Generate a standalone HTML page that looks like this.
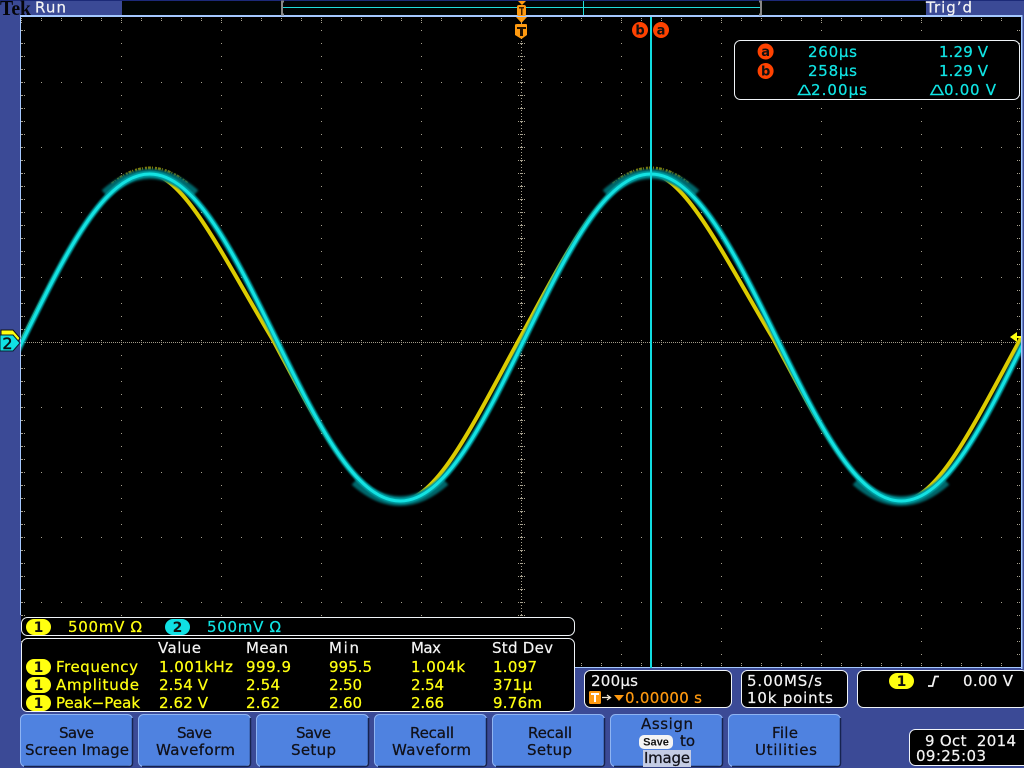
<!DOCTYPE html>
<html><head><meta charset="utf-8"><style>
html,body{margin:0;padding:0;background:#000;width:1024px;height:768px;overflow:hidden}
svg{display:block}
text{font-family:"DejaVu Sans","Liberation Sans",sans-serif;font-size:15px;white-space:pre}
.y{fill:#ffff10;stroke:#ffff10;stroke-width:.25}.c{fill:#10e4e4;stroke:#10e4e4;stroke-width:.25}.w{fill:#f4f4f4;stroke:#f4f4f4;stroke-width:.2}.k{fill:#101018;stroke:#101018;stroke-width:.25}.o{fill:#ff9a10;stroke:#ff9a10;stroke-width:.25}
.box{fill:#000;stroke:#f0f4f8;stroke-width:1}
.btn{fill:#4f82e0;stroke:#8fb4f2;stroke-width:1}
.sh{fill:none;stroke:#16234f;stroke-width:1.5}
.pk{fill:#101010;font-size:14px;text-anchor:middle;font-weight:bold}
.cur{fill:#101010;font-size:13px;text-anchor:middle;font-weight:bold}
</style></head><body>
<svg width="1024" height="768" viewBox="0 0 1024 768" xmlns="http://www.w3.org/2000/svg">
<defs>
<pattern id="g" x="21" y="17" width="100" height="65" patternUnits="userSpaceOnUse">
<rect x="20" y="0" width="1" height="1" fill="#a8a290"/><rect x="40" y="0" width="1" height="1" fill="#a8a290"/><rect x="60" y="0" width="1" height="1" fill="#a8a290"/><rect x="80" y="0" width="1" height="1" fill="#a8a290"/>
<rect x="0" y="0" width="1" height="1" fill="#a8a290"/><rect x="0" y="13" width="1" height="1" fill="#a8a290"/><rect x="0" y="26" width="1" height="1" fill="#a8a290"/><rect x="0" y="39" width="1" height="1" fill="#a8a290"/><rect x="0" y="52" width="1" height="1" fill="#a8a290"/>
</pattern>
<pattern id="tk" x="21" y="18" width="20" height="5" patternUnits="userSpaceOnUse"><rect x="0" y="0" width="1" height="1" fill="#a8a290"/><rect x="0" y="2" width="1" height="1" fill="#a8a290"/></pattern>
<pattern id="tm" x="21" y="18" width="100" height="6" patternUnits="userSpaceOnUse"><rect x="0" y="0" width="1" height="1" fill="#a8a290"/><rect x="0" y="2" width="1" height="1" fill="#a8a290"/><rect x="0" y="4" width="1" height="1" fill="#a8a290"/></pattern>
<pattern id="lt" x="21" y="17" width="5" height="13" patternUnits="userSpaceOnUse"><rect x="1" y="0" width="1" height="1" fill="#a8a290"/><rect x="3" y="0" width="1" height="1" fill="#a8a290"/></pattern>
<pattern id="hd" x="21" y="342" width="2" height="1" patternUnits="userSpaceOnUse"><rect x="0" y="0" width="1" height="1" fill="#a09a88"/></pattern>
<pattern id="vd" x="521" y="17" width="1" height="3" patternUnits="userSpaceOnUse"><rect x="0" y="0" width="1" height="1" fill="#a8a290"/></pattern>
<pattern id="ht" x="21" y="340" width="20" height="5" patternUnits="userSpaceOnUse"><rect x="0" y="0" width="1" height="1" fill="#a8a290"/><rect x="0" y="4" width="1" height="1" fill="#a8a290"/></pattern>
<pattern id="vt" x="518" y="17" width="7" height="13" patternUnits="userSpaceOnUse"><rect x="0" y="0" width="1" height="1" fill="#a8a290"/><rect x="2" y="0" width="1" height="1" fill="#a8a290"/><rect x="4" y="0" width="1" height="1" fill="#a8a290"/><rect x="6" y="0" width="1" height="1" fill="#a8a290"/></pattern>
<clipPath id="plot"><rect x="21" y="17" width="1000" height="651"/></clipPath>
<filter id="soft" x="-5%" y="-20%" width="110%" height="140%"><feGaussianBlur stdDeviation="1"/></filter>
<filter id="soft2" x="-5%" y="-5%" width="110%" height="110%"><feGaussianBlur stdDeviation="0.7"/></filter>
</defs>

<!-- frame -->
<rect width="1024" height="768" fill="#3b4a96"/>
<rect x="21" y="17" width="1000" height="651" fill="#000"/>
<rect x="20" y="15" width="1002" height="2" fill="#a5c8ff"/>
<rect x="20" y="15" width="1" height="600" fill="#a5c8ff"/>
<rect x="1021" y="15" width="1.5" height="654" fill="#a5c8ff"/>
<rect x="575" y="667" width="447" height="1" fill="#a5c8ff"/>

<!-- top bar -->
<rect x="0" y="0" width="1024" height="1" fill="#1c2a78"/>
<rect x="122" y="1" width="804" height="14" fill="#000504"/>
<rect x="283" y="7" width="478" height="1" fill="#20dcdc"/>
<rect x="583" y="1" width="1" height="14" fill="#20dcdc"/>
<path d="M284 1.5H282V14.5H284M759 1.5H761V14.5H759" fill="none" stroke="#888" stroke-width="2"/>
<text x="0" y="15" style="font-family:'Liberation Serif',serif;font-size:21px;font-weight:bold;fill:#05050a" textLength="31" lengthAdjust="spacingAndGlyphs">Tek</text>
<text x="35" y="12.5" class="w" textLength="31">Run</text>
<text x="926" y="12.5" class="w" textLength="46">Trig’d</text>

<!-- graticule -->
<g>
<rect x="21" y="18" width="1000" height="649" fill="url(#g)"/>
<rect x="21" y="18" width="1000" height="3" fill="url(#tk)"/>
<rect x="21" y="18" width="1000" height="5" fill="url(#tm)"/>
<rect x="21" y="663" width="1000" height="3" fill="url(#tk)"/>
<rect x="21" y="18" width="5" height="649" fill="url(#lt)"/>
<rect x="1016" y="18" width="5" height="649" fill="url(#lt)"/>
<rect x="21" y="342" width="1000" height="1" fill="url(#hd)"/>
<rect x="21" y="340" width="1000" height="5" fill="url(#ht)"/>
<rect x="521" y="18" width="1" height="649" fill="url(#vd)"/>
<rect x="518" y="18" width="7" height="649" fill="url(#vt)"/>
</g>

<!-- waveforms -->
<g clip-path="url(#plot)" fill="none">
<g stroke="#857e08" stroke-width="3" stroke-dasharray="3 1 1 2 2 1">
<path d="M112 184Q150 152 188 184M613 184Q651 152 689 184"/>
</g>
<path d="M21 342C65.35 253.7 104.4 174 149.75 174C184 174 226 262 273 340C316 420 355 501 400 501C437 501 474 422 520 338C566 253.7 605 174 650.75 174C685 174 727 262 774 340C817 420 856 501 901 501C938 501 975 422 1021 338" stroke="#dccc00" stroke-width="4"/>
<g stroke="#04666a" stroke-width="10" filter="url(#soft)">
<path d="M105 194Q150 154 195 194M606 194Q651 154 696 194M355 481Q400 521 445 481M856 481Q901 521 946 481"/>
</g>
<path filter="url(#soft2)" d="M-101 501C-55 501 -16 420.3 24.5 337C65.35 253.7 104.4 174 149.75 174C195.1 174 234.15 253.7 275 337C315.85 420.3 354.9 501 400.25 501C445.6 501 484.65 420.3 525.5 337C566.35 253.7 605.4 174 650.75 174C696.1 174 735.15 253.7 776 337C816.85 420.3 855.9 501 901.25 501C946.6 501 985.65 420.3 1026.5 337" stroke="#04a0a4" stroke-width="6"/>
<path d="M-101 501C-55 501 -16 420.3 24.5 337C65.35 253.7 104.4 174 149.75 174C195.1 174 234.15 253.7 275 337C315.85 420.3 354.9 501 400.25 501C445.6 501 484.65 420.3 525.5 337C566.35 253.7 605.4 174 650.75 174C696.1 174 735.15 253.7 776 337C816.85 420.3 855.9 501 901.25 501C946.6 501 985.65 420.3 1026.5 337" stroke="#14e2e2" stroke-width="3"/>
</g>

<!-- cursor -->
<rect x="650" y="17" width="2" height="651" fill="#10dce0"/>

<!-- cursor markers -->
<circle cx="640" cy="30" r="8" fill="#ff4200"/><text x="640" y="34.5" class="cur">b</text>
<circle cx="661" cy="30" r="8" fill="#ff4200"/><text x="661" y="34.5" class="cur">a</text>

<!-- trigger markers -->
<path d="M518 1H526L522 5Z" fill="#ff9a10"/>
<rect x="517" y="5" width="9" height="11" rx="2" fill="#ff9a10"/>
<rect x="519" y="7" width="5" height="1.5" fill="#402000"/><rect x="521" y="7" width="1.5" height="8" fill="#402000"/>
<path d="M516 17H527L521.5 23Z" fill="#ff9a10"/>
<path d="M517 24H526Q527 24 527 25V35L521.5 39L515 35V25Q515 24 517 24Z" fill="#ff9a10"/>
<rect x="517" y="27" width="9" height="2" fill="#201000"/><rect x="520" y="27" width="3" height="9" fill="#201000"/>

<!-- readout -->
<rect x="734.5" y="40.5" width="285" height="59" rx="6" class="box" fill-opacity="1"/>
<circle cx="765.6" cy="51.5" r="8" fill="#ff4200"/><text x="765.6" y="56" class="cur">a</text>
<circle cx="765.6" cy="71" r="8" fill="#ff4200"/><text x="765.6" y="75.5" class="cur">b</text>
<text x="808" y="57" class="c" textLength="49">260µs</text>
<text x="939" y="57" class="c" textLength="49">1.29 V</text>
<text x="808" y="76" class="c" textLength="49">258µs</text>
<text x="939" y="76" class="c" textLength="49">1.29 V</text>
<path d="M803.5 85.5L798.5 94.5H810L805 85.5ZM936 85.5L931 94.5H943L938 85.5Z" fill="none" stroke="#10e4e4" stroke-width="1.6"/>
<text x="811" y="95" class="c" textLength="56">2.00µs</text>
<text x="944" y="95" class="c" textLength="52">0.00 V</text>

<!-- channel markers -->
<path d="M1 330H13L20 338L13 350H1Z" fill="#ffff10" stroke="#111" stroke-width="1"/>
<path d="M0 335H13L20 343L13 351H0Z" fill="#10e0e4" stroke="#0a2030" stroke-width="1"/>
<text x="7.5" y="349" style="font-size:16px;fill:#0a1015;stroke:#0a1015;stroke-width:.5;text-anchor:middle">2</text>
<path d="M1010 337L1017 332V342Z" fill="#ffff10"/><rect x="1016" y="336" width="5" height="2" fill="#ffff10"/>

<!-- channel bar -->
<rect x="21.5" y="617.5" width="553" height="18" rx="6" class="box"/>
<rect x="26" y="619" width="25" height="16" rx="8" fill="#ffff10"/><text x="38.5" y="632" class="pk">1</text>
<text x="68" y="632" class="y" textLength="74">500mV Ω</text>
<rect x="165" y="619" width="25" height="16" rx="8" fill="#10e0e4"/><text x="177.5" y="632" class="pk">2</text>
<text x="207" y="632" class="c" textLength="74">500mV Ω</text>

<!-- measurement table -->
<rect x="21.5" y="638.5" width="553" height="73" rx="6" class="box"/>
<text x="158" y="653" class="w" textLength="43">Value</text>
<text x="246" y="653" class="w" textLength="42">Mean</text>
<text x="329" y="653" class="w" textLength="30">Min</text>
<text x="411" y="653" class="w" textLength="30">Max</text>
<text x="492" y="653" class="w" textLength="61">Std Dev</text>

<rect x="26" y="659" width="25" height="16" rx="8" fill="#ffff10"/><text x="38.5" y="672" class="pk">1</text>
<text x="56" y="672" class="y" textLength="82">Frequency</text>
<text x="159" y="672" class="y" textLength="74">1.001kHz</text>
<text x="246" y="672" class="y" textLength="45">999.9</text>
<text x="329" y="672" class="y" textLength="43">995.5</text>
<text x="411" y="672" class="y" textLength="54">1.004k</text>
<text x="493" y="672" class="y" textLength="44">1.097</text>

<rect x="26" y="677" width="25" height="16" rx="8" fill="#ffff10"/><text x="38.5" y="690" class="pk">1</text>
<text x="56" y="690" class="y" textLength="83">Amplitude</text>
<text x="159" y="690" class="y" textLength="49">2.54 V</text>
<text x="246" y="690" class="y" textLength="34">2.54</text>
<text x="329" y="690" class="y" textLength="33">2.50</text>
<text x="411" y="690" class="y" textLength="33">2.54</text>
<text x="493" y="690" class="y" textLength="39">371µ</text>

<rect x="26" y="695" width="25" height="16" rx="8" fill="#ffff10"/><text x="38.5" y="708" class="pk">1</text>
<text x="56" y="708" class="y" textLength="84">Peak−Peak</text>
<text x="159" y="708" class="y" textLength="49">2.62 V</text>
<text x="246" y="708" class="y" textLength="34">2.62</text>
<text x="329" y="708" class="y" textLength="33">2.60</text>
<text x="411" y="708" class="y" textLength="33">2.66</text>
<text x="493" y="708" class="y" textLength="49">9.76m</text>

<!-- timebase boxes -->
<rect x="584.5" y="670.5" width="147" height="37" rx="6" class="box"/>
<text x="591" y="686" class="w" textLength="47">200µs</text>
<rect x="589" y="691" width="12" height="13" rx="1.5" fill="#ff9a10"/>
<rect x="591" y="693" width="8" height="2" fill="#fff"/><rect x="594" y="693" width="2" height="9" fill="#fff"/>
<path d="M602 697.5H610M607 695L610.5 697.5L607 700" fill="none" stroke="#f0e8d8" stroke-width="1.3"/>
<path d="M614 695H624L619 701Z" fill="#ff9a10"/>
<text x="625" y="703" class="o" textLength="77">0.00000 s</text>

<rect x="741.5" y="670.5" width="106" height="37" rx="6" class="box"/>
<text x="747" y="686" class="w" textLength="75">5.00MS/s</text>
<text x="747" y="703" class="w" textLength="86">10k points</text>

<rect x="857.5" y="670.5" width="170" height="37" rx="6" class="box"/>
<rect x="889" y="673" width="25" height="16" rx="8" fill="#ffff10"/><text x="901.5" y="686" class="pk">1</text>
<path d="M928 686H932.5L935 676.5H939" fill="none" stroke="#f4f4f4" stroke-width="1.8"/>
<text x="963" y="686" class="w" textLength="50">0.00 V</text>

<!-- buttons -->
<g>
<rect x="20.5" y="714.5" width="112" height="52" rx="5" class="btn"/><path d="M132.5 718V763Q132.5 766.5 129 766.5H24" class="sh"/>
<rect x="138.5" y="714.5" width="112" height="52" rx="5" class="btn"/><path d="M250.5 718V763Q250.5 766.5 247 766.5H142" class="sh"/>
<rect x="256.5" y="714.5" width="112" height="52" rx="5" class="btn"/><path d="M368.5 718V763Q368.5 766.5 365 766.5H260" class="sh"/>
<rect x="374.5" y="714.5" width="112" height="52" rx="5" class="btn"/><path d="M486.5 718V763Q486.5 766.5 483 766.5H378" class="sh"/>
<rect x="492.5" y="714.5" width="112" height="52" rx="5" class="btn"/><path d="M604.5 718V763Q604.5 766.5 601 766.5H496" class="sh"/>
<rect x="610.5" y="714.5" width="112" height="52" rx="5" class="btn"/><path d="M722.5 718V763Q722.5 766.5 719 766.5H614" class="sh"/>
<rect x="728.5" y="714.5" width="112" height="52" rx="5" class="btn"/><path d="M840.5 718V763Q840.5 766.5 837 766.5H732" class="sh"/>
</g>
<text x="59" y="738" class="k" textLength="35">Save</text>
<text x="25" y="755" class="k" textLength="104">Screen Image</text>
<text x="177" y="738" class="k" textLength="35">Save</text>
<text x="156" y="755" class="k" textLength="79">Waveform</text>
<text x="296" y="738" class="k" textLength="35">Save</text>
<text x="291" y="755" class="k" textLength="45">Setup</text>
<text x="410" y="738" class="k" textLength="44">Recall</text>
<text x="392" y="755" class="k" textLength="79">Waveform</text>
<text x="528" y="738" class="k" textLength="44">Recall</text>
<text x="527" y="755" class="k" textLength="45">Setup</text>
<text x="641" y="729" class="k" textLength="52">Assign</text>
<rect x="639" y="735" width="34" height="14" rx="5" fill="#f4f4f4"/>
<text x="656" y="745.5" style="font-family:'Liberation Sans',sans-serif;font-size:11px;font-weight:bold;fill:#111;text-anchor:middle">Save</text>
<text x="680" y="746" class="k" textLength="15">to</text>
<rect x="643" y="750" width="48" height="17" fill="#c4cce4"/>
<text x="644" y="763" class="k" textLength="46">Image</text>
<text x="772" y="738" class="k" textLength="26">File</text>
<text x="755" y="755" class="k" textLength="62">Utilities</text>

<!-- date -->
<rect x="909.5" y="729.5" width="120" height="36" rx="6" class="box"/>
<text x="925" y="746" class="w" textLength="91">9 Oct  2014</text>
<text x="916" y="761" class="w" textLength="70">09:25:03</text>
</svg>
</body></html>
